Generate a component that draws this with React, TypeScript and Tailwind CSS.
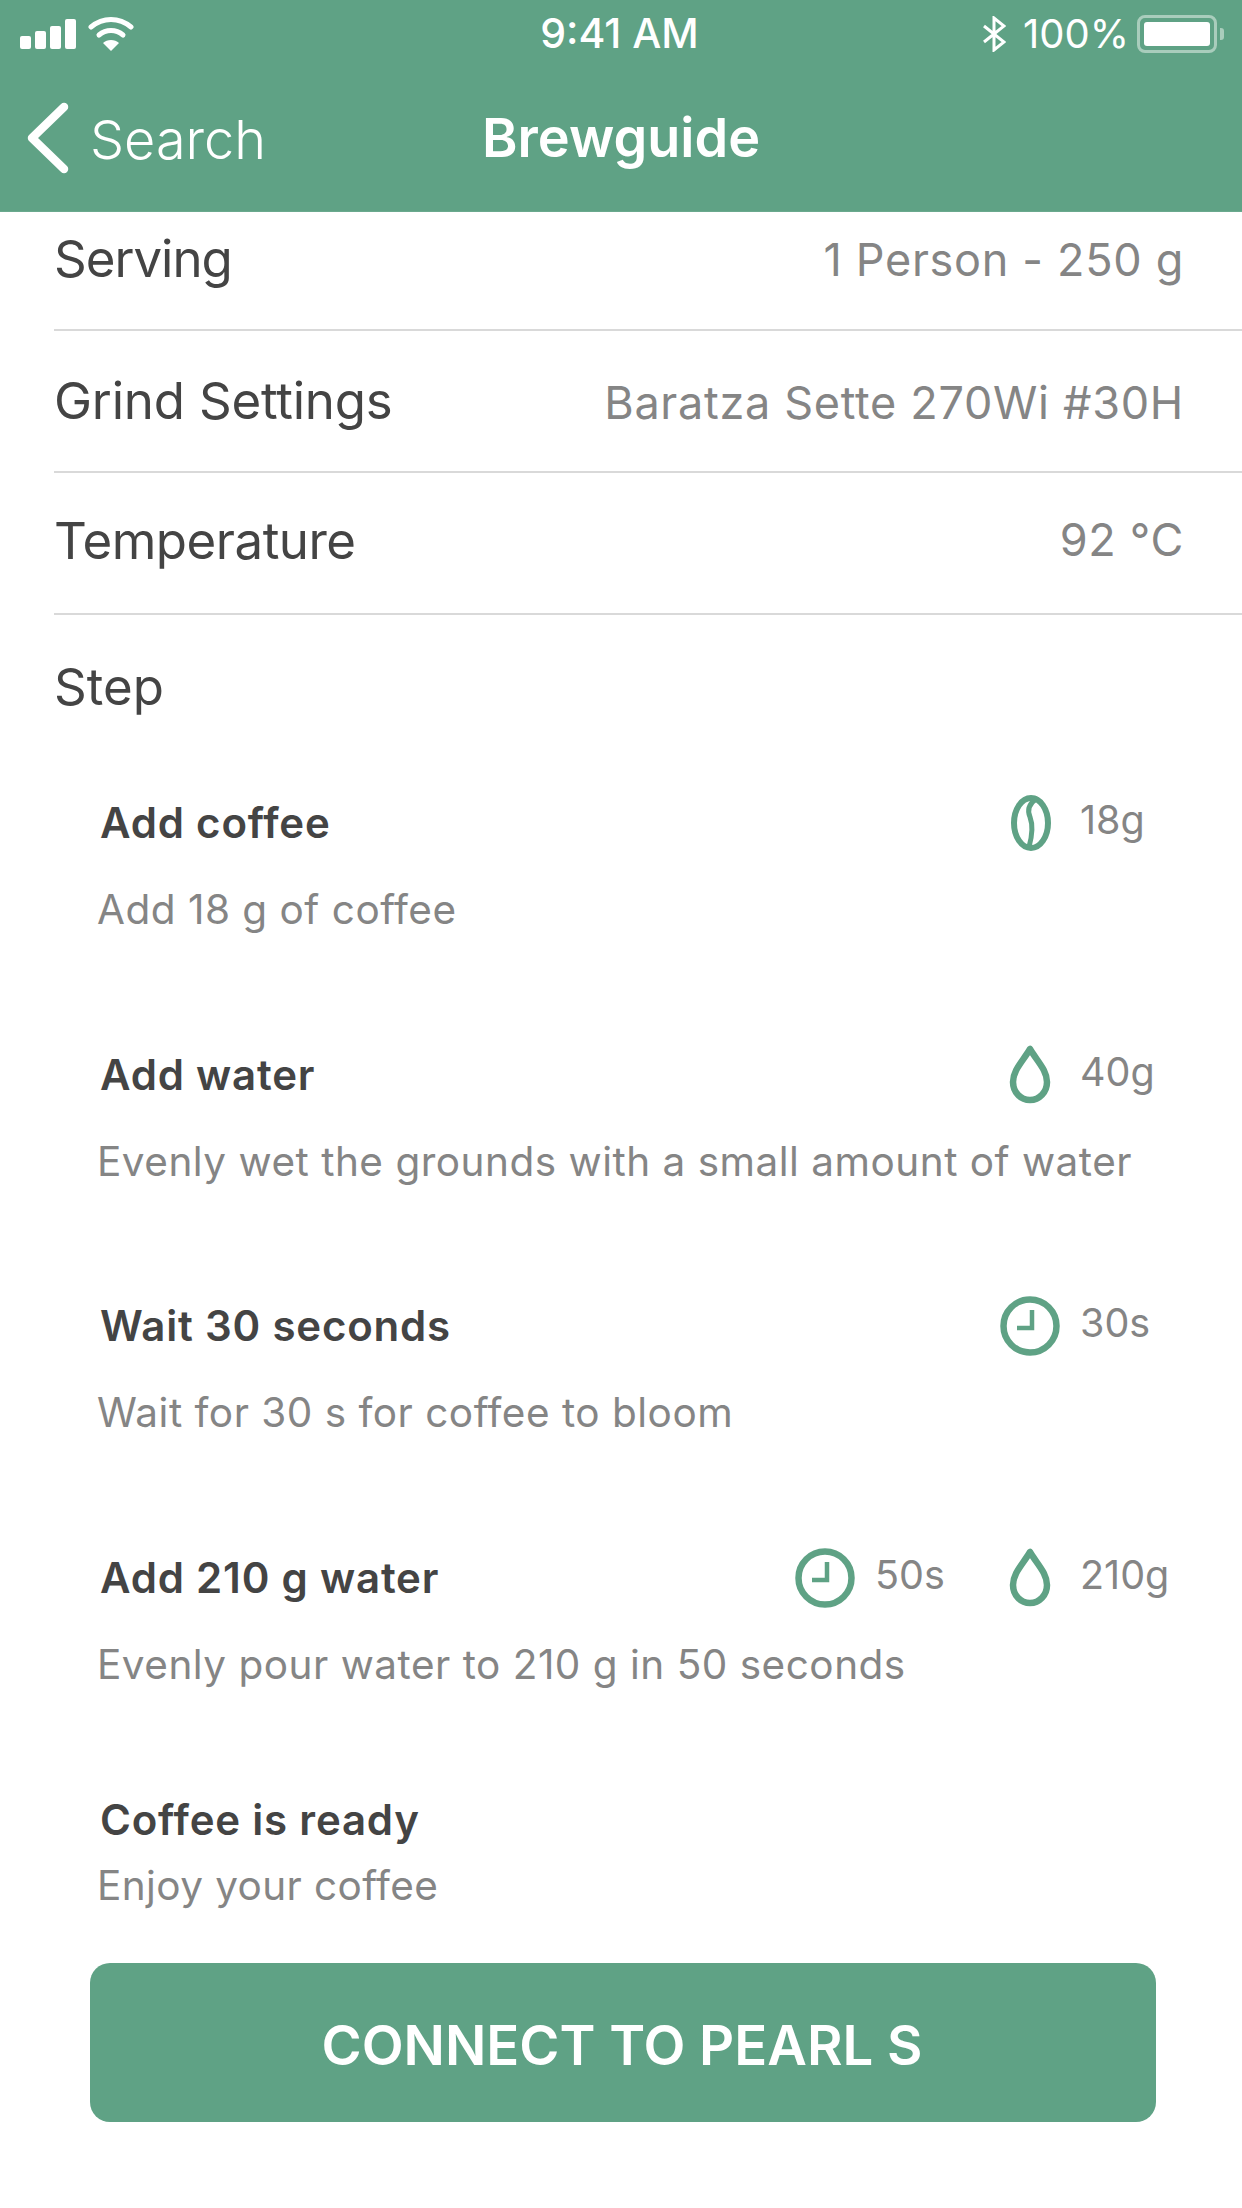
import React from 'react';

const BeanIcon = () => (
  <svg className="ml-[2px]" width="40" height="56" viewBox="0 0 40 56" fill="none" stroke="#5fa285" strokeWidth="6">
    <ellipse cx="20" cy="28" rx="17" ry="25" />
    <path d="M25 4c-7 5-9 11-6 18 3 8 3 16-1 30" strokeLinecap="round" strokeWidth="5" />
  </svg>
);

const DropIcon = () => (
  <svg className="-mt-[2px]" width="42" height="60" viewBox="0 0 42 60" fill="none" stroke="#5fa285" strokeWidth="6.5">
    <path d="M21 5C14 17 4 26 4 38c0 10 7.5 18 17 18s17-8 17-18C38 26 28 17 21 5z" strokeLinejoin="round" />
  </svg>
);

const ClockIcon = () => (
  <svg width="60" height="60" viewBox="0 0 60 60" fill="none" stroke="#5fa285" strokeWidth="6.5">
    <circle cx="30" cy="30" r="26.5" />
    <path d="M32 14v18H17" strokeWidth="4.5" />
  </svg>
);

const Row = ({ label, value, className, labelClass = '', valueClass = '' }: { label: string; value: string; className: string; labelClass?: string; valueClass?: string }) => (
  <div className={`flex items-center justify-between border-b-2 border-[#d9d9d9] pr-[58px] ${className}`}>
    <span className={`text-[51px] text-[#444444] ${labelClass}`}>{label}</span>
    <span className={`text-[45px] tracking-[0.7px] text-[#858585] ${valueClass}`}>{value}</span>
  </div>
);

const Meta = ({ icon, text, className }: { icon: React.ReactNode; text: string; className: string }) => (
  <div className="flex items-center">
    <div className="w-[60px] flex justify-center">{icon}</div>
    <span className={`text-[39.5px] text-[#858585] ml-[20px] pb-[5px] ${className}`}>{text}</span>
  </div>
);

const Step = ({ title, desc, meta, className }: { title: string; desc: string; meta?: React.ReactNode; className: string }) => (
  <div className={className}>
    <div className="h-[60px] flex items-center justify-between">
      <span className="text-[42px] font-semibold tracking-[0.8px] text-[#444444] pl-[3px] pb-[2px]">{title}</span>
      <div className="flex items-center">{meta}</div>
    </div>
    <p className="mt-[27px] text-[40.5px] leading-[60px] tracking-[0.5px] text-[#858585]">{desc}</p>
  </div>
);

export default function App() {
  return (
    <div className="w-[1242px] h-[2208px] bg-white overflow-hidden font-['Inter','Liberation_Sans',sans-serif]">
      <header className="h-[212px] bg-[#5fa285] text-white border-b border-[#6aa98e]">
        <div className="h-[68px] flex items-center justify-between pl-[20px] pr-[18px]">
          <div className="flex items-center w-[400px] gap-[12px]">
            <div className="flex items-end gap-[4px] h-[30px]">
              <div className="w-[11px] h-[13px] bg-white rounded-[2px]" />
              <div className="w-[11px] h-[18px] bg-white rounded-[2px]" />
              <div className="w-[11px] h-[23px] bg-white rounded-[2px]" />
              <div className="w-[11px] h-[30px] bg-white rounded-[2px]" />
            </div>
            <svg width="46" height="34" viewBox="0 0 46 34" fill="none" stroke="#fff" strokeWidth="5" strokeLinecap="round">
              <path d="M3 10c12-10 28-10 40 0" />
              <path d="M11 18c7-6 17-6 24 0" />
              <path d="M23 34l-8-8c4-4 12-4 16 0z" fill="#fff" stroke="none" />
            </svg>
          </div>
          <span className="text-[41px] font-medium pr-[5px]">9:41 AM</span>
          <div className="w-[400px] flex items-center justify-end">
            <svg width="24" height="36" viewBox="0 0 24 36" fill="none" stroke="#fff" strokeWidth="3">
              <path d="M2 10l20 16-10 8V2l10 8L2 26" />
            </svg>
            <span className="ml-[17px] text-[40px]">100%</span>
            <div className="ml-[8px] w-[80px] h-[38px] rounded-[8px] border-[3px] border-[#a9cdbc] p-[4px]">
              <div className="w-full h-full bg-white rounded-[3px]" />
            </div>
            <div className="ml-[3px] w-[4px] h-[12px] bg-[#a9cdbc] rounded-r-[3px]" />
          </div>
        </div>
        <div className="h-[143px] flex items-center relative">
          <svg className="ml-[25px] -mt-[4px]" width="46" height="72" viewBox="0 0 46 72" fill="none" stroke="#fff" strokeWidth="8.5" strokeLinecap="round" strokeLinejoin="round">
            <path d="M39 5L7 36l32 31" />
          </svg>
          <span className="ml-[19px] text-[54px] font-light">Search</span>
          <span className="absolute left-[482px] top-[40px] text-[54px] font-semibold leading-[60px]">Brewguide</span>
        </div>
      </header>

      <main className="pl-[54px]">
        <Row className="h-[119px] pb-[22px]" labelClass="tracking-[-1px]" label="Serving" value="1 Person - 250 g" />
        <Row className="h-[142px]" labelClass="pt-[1px] tracking-[-0.2px]" valueClass="pt-[4px]" label="Grind Settings" value="Baratza Sette 270Wi #30H" />
        <Row className="h-[142px]" labelClass="pb-[3px] tracking-[-0.5px]" valueClass="pb-[6px]" label="Temperature" value="92 °C" />
        <div className="h-[144px] flex items-center text-[51px] text-[#444444]">Step</div>
      </main>

      <section className="pl-[97px] pr-[52px] pt-[34px]">
        <Step
          className="h-[252px]"
          title="Add coffee"
          desc="Add 18 g of coffee"
          meta={<Meta icon={<BeanIcon />} text="18g" className="w-[110px]" />}
        />
        <Step
          className="h-[251px]"
          title="Add water"
          desc="Evenly wet the grounds with a small amount of water"
          meta={<Meta icon={<DropIcon />} text="40g" className="w-[110px]" />}
        />
        <Step
          className="h-[252px]"
          title="Wait 30 seconds"
          desc="Wait for 30 s for coffee to bloom"
          meta={<Meta icon={<ClockIcon />} text="30s" className="w-[110px]" />}
        />
        <Step
          className="h-[242px]"
          title="Add 210 g water"
          desc="Evenly pour water to 210 g in 50 seconds"
          meta={
            <>
              <Meta icon={<ClockIcon />} text="50s" className="w-[125px]" />
              <Meta icon={<DropIcon />} text="210g" className="w-[110px]" />
            </>
          }
        />
        <div className="h-[60px] flex items-center text-[42px] font-semibold tracking-[0.8px] text-[#444444] pl-[3px] pb-[2px]">Coffee is ready</div>
        <p className="mt-[6px] text-[40.5px] leading-[60px] tracking-[0.4px] text-[#858585]">Enjoy your coffee</p>
      </section>

      <div className="mt-[47px] mx-[90px] w-[1066px] h-[159px] pt-[6px] pr-[2px] rounded-[20px] bg-[#5fa285] flex items-center justify-center text-[54.5px] font-semibold text-white">
        CONNECT TO PEARL S
      </div>
    </div>
  );
}
